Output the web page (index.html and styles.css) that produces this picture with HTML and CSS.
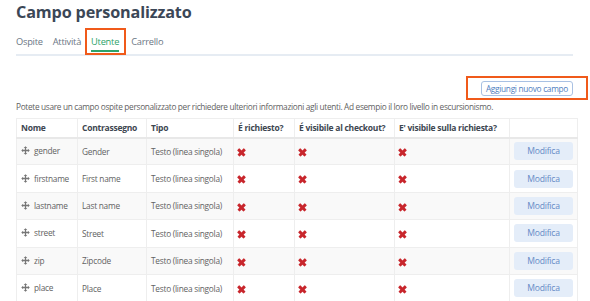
FILE: index.html
```html
<!DOCTYPE html>
<html lang="it">
<head>
<meta charset="utf-8">
<link rel="stylesheet" href="styles.css">
</head>
<body>
<div class="page">
  <h1 class="title">Campo personalizzato</h1>
  <nav class="tabs">
    <a class="tab">Ospite</a>
    <a class="tab">Attività</a>
    <a class="tab active">Utente</a>
    <a class="tab">Carrello</a>
  </nav>
  <div class="actions">
    <span class="hl-box"><button class="btn-add">Aggiungi nuovo campo</button></span>
  </div>
  <p class="intro">Potete usare un campo ospite personalizzato per richiedere ulteriori informazioni agli utenti. Ad esempio il loro livello in escursionismo.</p>
  <table class="fields">
    <colgroup>
      <col class="c1"><col class="c2"><col class="c3"><col class="c4"><col class="c5"><col class="c6"><col class="c7">
    </colgroup>
    <thead>
      <tr><th>Nome</th><th>Contrassegno</th><th>Tipo</th><th>É richiesto?</th><th>É visibile al checkout?</th><th>E' visibile sulla richiesta?</th><th></th></tr>
    </thead>
    <tbody>
      <tr><td><span class="mv"><svg viewBox="0 0 10 10" width="9" height="9"><path d="M5 0.3L7 2.3H5.7V4.3H7.7V3L9.7 5L7.7 7V5.7H5.7V7.7H7L5 9.7L3 7.7H4.3V5.7H2.3V7L0.3 5L2.3 3V4.3H4.3V2.3H3Z" fill="#767676"/></svg></span>gender</td><td>Gender</td><td>Testo (linea singola)</td><td><i class="x"></i></td><td><i class="x"></i></td><td><i class="x"></i></td><td><button class="btn-edit">Modifica</button></td></tr>
      <tr><td><span class="mv"><svg viewBox="0 0 10 10" width="9" height="9"><path d="M5 0.3L7 2.3H5.7V4.3H7.7V3L9.7 5L7.7 7V5.7H5.7V7.7H7L5 9.7L3 7.7H4.3V5.7H2.3V7L0.3 5L2.3 3V4.3H4.3V2.3H3Z" fill="#767676"/></svg></span>firstname</td><td>First name</td><td>Testo (linea singola)</td><td><i class="x"></i></td><td><i class="x"></i></td><td><i class="x"></i></td><td><button class="btn-edit">Modifica</button></td></tr>
      <tr><td><span class="mv"><svg viewBox="0 0 10 10" width="9" height="9"><path d="M5 0.3L7 2.3H5.7V4.3H7.7V3L9.7 5L7.7 7V5.7H5.7V7.7H7L5 9.7L3 7.7H4.3V5.7H2.3V7L0.3 5L2.3 3V4.3H4.3V2.3H3Z" fill="#767676"/></svg></span>lastname</td><td>Last name</td><td>Testo (linea singola)</td><td><i class="x"></i></td><td><i class="x"></i></td><td><i class="x"></i></td><td><button class="btn-edit">Modifica</button></td></tr>
      <tr><td><span class="mv"><svg viewBox="0 0 10 10" width="9" height="9"><path d="M5 0.3L7 2.3H5.7V4.3H7.7V3L9.7 5L7.7 7V5.7H5.7V7.7H7L5 9.7L3 7.7H4.3V5.7H2.3V7L0.3 5L2.3 3V4.3H4.3V2.3H3Z" fill="#767676"/></svg></span>street</td><td>Street</td><td>Testo (linea singola)</td><td><i class="x"></i></td><td><i class="x"></i></td><td><i class="x"></i></td><td><button class="btn-edit">Modifica</button></td></tr>
      <tr><td><span class="mv"><svg viewBox="0 0 10 10" width="9" height="9"><path d="M5 0.3L7 2.3H5.7V4.3H7.7V3L9.7 5L7.7 7V5.7H5.7V7.7H7L5 9.7L3 7.7H4.3V5.7H2.3V7L0.3 5L2.3 3V4.3H4.3V2.3H3Z" fill="#767676"/></svg></span>zip</td><td>Zipcode</td><td>Testo (linea singola)</td><td><i class="x"></i></td><td><i class="x"></i></td><td><i class="x"></i></td><td><button class="btn-edit">Modifica</button></td></tr>
      <tr><td><span class="mv"><svg viewBox="0 0 10 10" width="9" height="9"><path d="M5 0.3L7 2.3H5.7V4.3H7.7V3L9.7 5L7.7 7V5.7H5.7V7.7H7L5 9.7L3 7.7H4.3V5.7H2.3V7L0.3 5L2.3 3V4.3H4.3V2.3H3Z" fill="#767676"/></svg></span>place</td><td>Place</td><td>Testo (linea singola)</td><td><i class="x"></i></td><td><i class="x"></i></td><td><i class="x"></i></td><td><button class="btn-edit">Modifica</button></td></tr>
    </tbody>
  </table>
</div>
</body>
</html>
```
FILE: styles.css
```css
html, body { margin: 0; padding: 0; background: #fff; }
body { font-family: "Open Sans", "Liberation Sans", sans-serif; color: #555; overflow: hidden; }
.page { padding: 0 13px 0 16px; width: 561px; }
.title { margin: 0; padding-top: 1px; font-size: 16.2px; letter-spacing: -0.15px; line-height: 22px; font-weight: 700; color: #3b4757; }
.tabs { display: flex; align-items: flex-start; gap: 10px; margin-top: 5px; border-bottom: 2px solid #e6ecf3; height: 26px; margin-right: 4px; }
.tab { font-size: 9.3px; letter-spacing: -0.25px; line-height: 27px; color: #6b7684; position: relative; }
.tab.active { color: #2ea36a; border: 2px solid #f05a1a; padding: 0 5px 0 4px; margin: 0 -5px 0 -6px; height: 27px; line-height: 23px; box-sizing: border-box; }
.tab.active::after { content: ""; position: absolute; left: 4px; right: 5px; bottom: 1px; height: 2px; background: #2ea36a; }
.actions { display: flex; justify-content: flex-end; margin-top: 20px; margin-right: -11px; }
.hl-box { display: block; border: 2px solid #f05a1a; padding: 3px 13px 2px 13px; height: 15px; }
.btn-add { font-family: inherit; font-size: 8.3px; letter-spacing: -0.3px; color: #4f7ec0; background: #fff; border: 1px solid #a9c1e3; border-radius: 3px; height: 15px; padding: 0 4px; line-height: 12px; display: block; }
.intro { margin: 0; font-size: 8.3px; letter-spacing: -0.33px; line-height: 14px; color: #5f5f5f; white-space: nowrap; }
.fields { margin-top: 4px; border-collapse: collapse; width: 561px; table-layout: fixed; font-size: 8.3px; letter-spacing: -0.25px; }
.c1 { width: 61px; } .c2 { width: 69px; } .c3 { width: 87px; } .c4 { width: 61px; } .c5 { width: 100px; } .c6 { width: 115px; } .c7 { width: 68px; }
.fields th, .fields td { border: 1px solid #eee; text-align: left; padding: 0 4px; white-space: nowrap; overflow: hidden; }
.fields thead tr { height: 19px; }
.fields th { font-size: 8.5px; font-weight: 700; color: #3d4650; border-bottom: 2px solid #e8e8e8; }
.fields tbody tr { height: 27.4px; }
.fields td { color: #626262; }
.fields tbody tr:nth-child(odd) td { background: #f9f9f9; }
.mv { display: inline-block; vertical-align: -1px; margin-right: 4px; }
.x { display: inline-block; width: 7px; height: 7px; position: relative; vertical-align: -1px; }
.x::before, .x::after { content: ""; position: absolute; left: -1px; top: 2.4px; width: 9px; height: 2.5px; background: #c8262c; border-radius: 0.5px; }
.x::before { transform: rotate(45deg); }
.x::after { transform: rotate(-45deg); }
.btn-edit { font-family: inherit; font-size: 8.6px; letter-spacing: -0.2px; color: #648bc6; background: #e4edf9; border: none; border-radius: 3px; width: 59px; height: 18px; display: block; }
```
